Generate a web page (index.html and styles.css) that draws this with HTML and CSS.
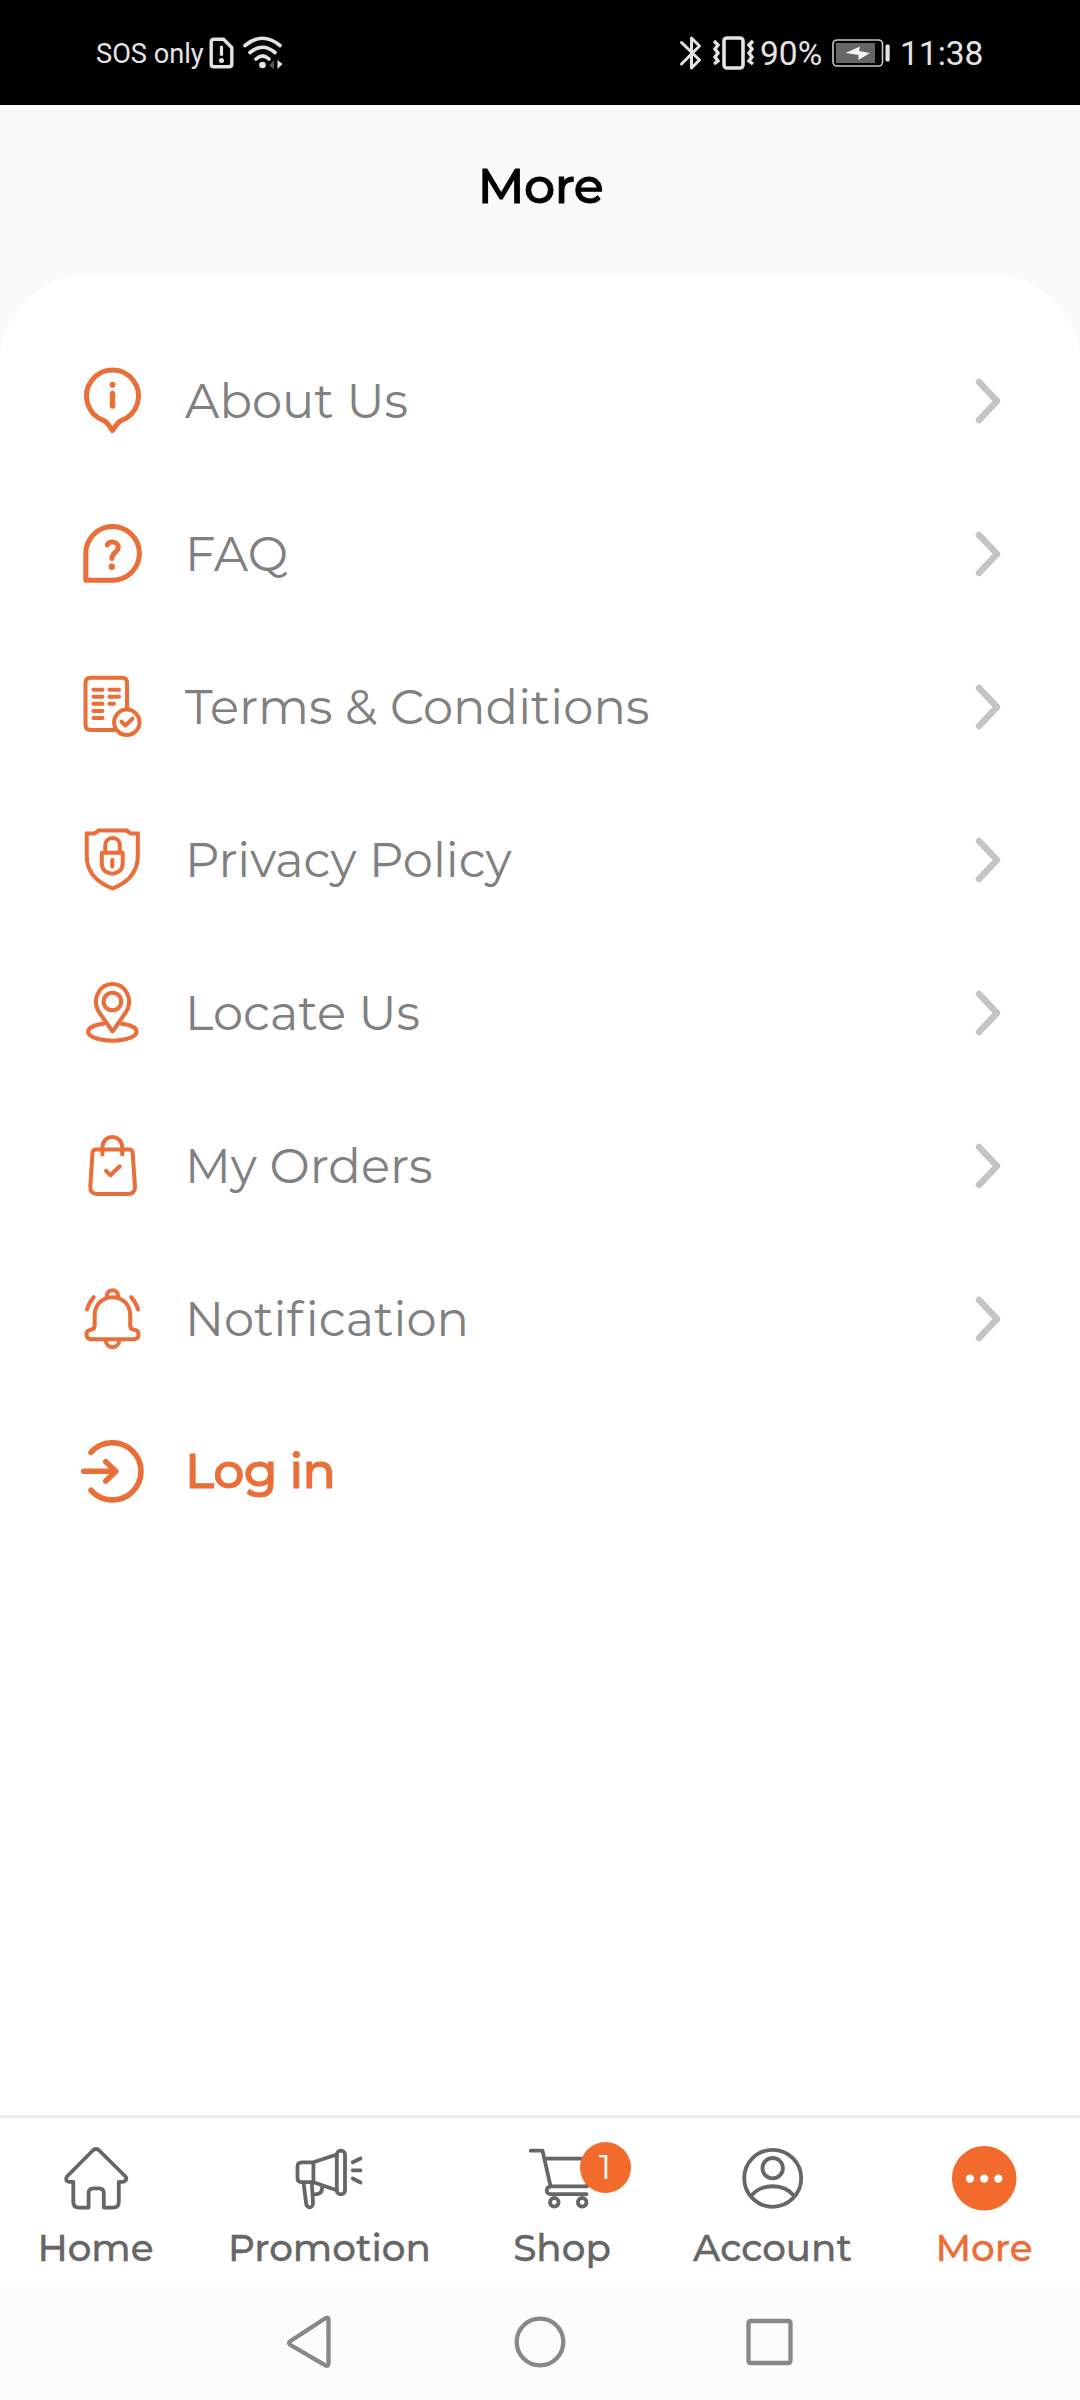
FILE: index.html
```html
<!DOCTYPE html>
<html lang="en">
<head>
<meta charset="utf-8">
<title>More</title>
<link rel="stylesheet" href="styles.css">
</head>
<body>
<div class="status">
  <span class="carrier">SOS only</span>
  <svg class="sim" width="26" height="34" viewBox="0 0 26 34"><path d="M5 3.2H14.5L22.8 11.500V28Q22.800 30.800 20 30.800H5Q2.200 30.800 2.200 28V6Q2.200 3.200 5 3.200Z" fill="none" stroke="#e4e4e4" stroke-width="3.400" stroke-linejoin="round"/><path d="M12.500 11V18.500" stroke="#e4e4e4" stroke-width="3.200" stroke-linecap="round"/><circle cx="12.500" cy="24.500" r="2.500" fill="#e4e4e4"/></svg>
  <svg class="wifi" width="42" height="34" viewBox="0 0 42 34"><g fill="none" stroke="#e4e4e4" stroke-width="3.600" stroke-linecap="round"><path d="M3 9.500Q20.500-5 38 9.500"/><path d="M8 16.500Q20.500 6 33 16.500"/><path d="M14 23Q20.500 17 27 23"/></g><circle cx="20.500" cy="29" r="3.300" fill="#e4e4e4"/><path d="M32 24V33L27 29.500Z" fill="#555"/><path d="M35.500 24L40.500 28L35.500 33Z" fill="#e4e4e4"/></svg>
  <span class="spacer"></span>
  <svg class="bt" width="24" height="36" viewBox="0 0 24 36"><path d="M2.500 7.500L20.500 25L12.500 33V3L20.500 11L2.500 29" fill="none" stroke="#e4e4e4" stroke-width="3" stroke-linejoin="round" stroke-linecap="round"/></svg>
  <svg class="vibrate" width="44" height="36" viewBox="0 0 44 36"><rect x="12" y="3" width="19" height="30" rx="3" fill="none" stroke="#e4e4e4" stroke-width="3.600"/><path d="M2 6L6 10L3 14L6 18L3 22L6 26L2 29M41 6L37 10L40 14L37 18L40 22L37 26L41 29" fill="none" stroke="#e4e4e4" stroke-width="3.400"/></svg>
  <span class="percent">90%</span>
  <svg class="battery" width="60" height="30" viewBox="0 0 60 30"><rect x="1" y="2" width="49.500" height="26" rx="4" fill="none" stroke="#c8c8c8" stroke-width="1.600"/><rect x="4" y="5" width="39" height="20" fill="#666"/><path d="M13.500 15L28 8.500L27 13L38 15L26.500 22L26.500 17Z" fill="#f4f4f4"/><rect x="53.500" y="6.500" width="4.200" height="17" rx="1.600" fill="#e4e4e4"/></svg>
  <span class="clock">11:38</span>
</div>
<header class="header"><h1 class="title">More</h1></header>
<main class="panel">
  <a class="row">
    <svg class="icon" viewBox="0 0 72 73" stroke-width="5"><path d="M45.500 56.400A26 26 0 1 0 27.500 56.400C31.500 58 32.500 61 36.500 66.500C40.500 61 41.500 58 45.500 56.400Z"/><circle class="solid" cx="36.500" cy="20.700" r="3"/><path d="M36.500 29.500V42" stroke-width="5.400"/></svg>
    <span class="label">About Us</span><svg class="chevron" viewBox="0 0 26 46"><path d="M4 4L22 23L4 42"/></svg>
  </a>
  <a class="row">
    <svg class="icon" viewBox="0 0 72 73" stroke-width="5"><path d="M9.800 63.200V36.400A26.800 26.800 0 1 1 36.800 63.200Z"/><path d="M31.300 28C32 23.500 42.500 24 42.300 30.500C42.200 35 35.800 35.500 35.800 41.500"/><circle class="solid" cx="35.800" cy="49.700" r="3.200"/></svg>
    <span class="label">FAQ</span><svg class="chevron" viewBox="0 0 26 46"><path d="M4 4L22 23L4 42"/></svg>
  </a>
  <a class="row">
    <svg class="icon" viewBox="0 0 72 73" stroke-width="4"><path d="M51 37V13Q51 7.800 46 7.800H14.500Q9.500 7.800 9.500 13V55Q9.500 60 14.500 60H38"/><circle cx="50.800" cy="52.300" r="12.700"/><path d="M17.400 19.700H26.500M33.500 19.700H43M17.400 26.700H26.500M33.500 26.700H43M17.400 33.700H26.500M33.500 33.700H38M17.400 41H26.500M17.400 48H26.500M45.500 51.700L49.400 55.500L56.500 48.700"/></svg>
    <span class="label terms">Terms &amp; Conditions</span><svg class="chevron" viewBox="0 0 26 46"><path d="M4 4L22 23L4 42"/></svg>
  </a>
  <a class="row">
    <svg class="icon" viewBox="0 0 72 73" stroke-width="4"><path class="miter" d="M10.700 10.500H18.500L22.500 7.600H51L54.500 10.500H61.800V33C61.800 49 53 59 36.500 65.500C20 59 10.700 49 10.700 33Z"/><path d="M25.800 29.800H46.700V40.500C46.700 54 25.800 54 25.800 40.500ZM29.300 29.500V22.500C29.300 12.500 43.800 12.500 43.800 22.500V29.500M36.300 36.800V43.500"/></svg>
    <span class="label">Privacy Policy</span><svg class="chevron" viewBox="0 0 26 46"><path d="M4 4L22 23L4 42"/></svg>
  </a>
  <a class="row">
    <svg class="icon" viewBox="0 0 72 73" stroke-width="4"><path d="M36.500 55.500L23.300 36.500C15 23.500 23.500 8 36.500 8C49.500 8 58 23.500 49.700 36.500Z"/><circle cx="36.400" cy="25.500" r="8.800"/><path d="M27.500 47.800C8 50 7.500 60 24 63.300C31 65 42 65 49 63.300C65 60 65 50 45.500 47.800"/></svg>
    <span class="label">Locate Us</span><svg class="chevron" viewBox="0 0 26 46"><path d="M4 4L22 23L4 42"/></svg>
  </a>
  <a class="row">
    <svg class="icon" viewBox="0 0 72 73" stroke-width="4"><path d="M20 20.500H53Q56.300 20.500 56.600 23.500L59 57.500Q59 65 51.500 65H21.500Q14 65 14.300 57.500L16.500 23.500Q17 20.500 20 20.500Z"/><path d="M26.400 25.500V18C27 4.500 45.500 4.500 46.200 18V25.500M30 41.900L34.300 46.200L43.700 37.300"/></svg>
    <span class="label">My Orders</span><svg class="chevron" viewBox="0 0 26 46"><path d="M4 4L22 23L4 42"/></svg>
  </a>
  <a class="row">
    <svg class="icon" viewBox="0 0 72 73" stroke-width="4"><path d="M15 57.200C9 56.500 9 48.500 15 47.800C17.500 47.500 18.700 46 18.700 43V33.500C18.700 9 54.200 9 54.200 33.500V43C54.200 46 55.500 47.500 58 47.800C64 48.500 64 56.500 58 57.200ZM30.800 14.500C31 6 42 6 42.200 14.500M29.500 58.500C31 67.500 42 67.500 43.500 58.500M17.800 15.200Q13 20.500 11 27.500M55.200 15.200Q60 20.500 62 27.500"/></svg>
    <span class="label">Noti<span class="loose">f</span>ication</span><svg class="chevron" viewBox="0 0 26 46"><path d="M4 4L22 23L4 42"/></svg>
  </a>
  <a class="row">
    <svg class="icon" viewBox="0 0 72 73" stroke-width="5.600"><path d="M15 17.300A28.600 28.600 0 1 1 15 55.300M7.800 36.300H39M29.800 26.800L39.800 36.300L29.800 46"/></svg>
    <span class="label login">Log in</span>
  </a>
</main>
<nav class="tabs">
  <a class="tab">
    <svg class="glyph" viewBox="0 0 80 80"><path d="M36.800 12.500Q40 9.500 43.200 12.500L69.500 38.500C71.500 41 69.500 43.800 66.500 43.800H62.800V64Q62.800 69.600 57 69.600H47.800V55Q47.800 50.300 43 50.300H37.500Q32.600 50.300 32.600 55V69.600H23Q17.300 69.600 17.300 64V43.800H13.500C10.500 43.800 9 41 11 38.500Z"/></svg>
    <span class="name">Home</span>
  </a>
  <a class="tab">
    <svg class="glyph" viewBox="0 0 80 80"><path d="M23.400 24.300H12Q7.500 24.300 7.500 28.500V40Q7.500 44.200 12 44.200H23.400ZM23.400 24.300L46.800 16.500M23.400 44.200L46.800 52.300M62.800 24.300L70.500 20.500M62.800 32.300H70.500M62.800 40.500L70.500 44.500M13.600 45L16 64.500C16.500 71.500 23.500 70.500 23 64.500L21.800 45M32 47.500V51Q32 56.300 24.500 56.300"/><rect x="46.800" y="12.600" width="8.200" height="43.800" rx="4.100"/></svg>
    <span class="name">Promotion</span>
  </a>
  <a class="tab">
    <span class="cart"><svg class="glyph" viewBox="0 0 80 80"><path d="M7.800 12.700H19.500L27.600 48.300H64M21.500 20.700H70L64 48.300M27.600 48.300C22.500 49 22.500 56.200 27.500 56.200H63.500"/><circle cx="31.300" cy="64.300" r="4.300"/><circle cx="59.200" cy="64.300" r="4.300"/></svg><span class="badge">1</span></span>
    <span class="name">Shop</span>
  </a>
  <a class="tab">
    <svg class="glyph" viewBox="0 0 80 80"><circle cx="39.700" cy="40.300" r="28.500"/><circle cx="39.700" cy="30.200" r="10.200"/><path d="M18.100 58C28.600 45 50.600 45 61.300 58"/></svg>
    <span class="name">Account</span>
  </a>
  <a class="tab active">
    <svg class="glyph" viewBox="0 0 80 80"><circle class="disc" cx="39.200" cy="40.300" r="32.300"/><g class="dots"><circle cx="25" cy="40.600" r="4.200"/><circle cx="39.200" cy="40.600" r="4.200"/><circle cx="53.300" cy="40.600" r="4.200"/></g></svg>
    <span class="name">More</span>
  </a>
</nav>
<div class="system">
  <svg class="key" viewBox="0 0 60 60"><path d="M48.500 9.500V53.500Q48.500 57 45 55.200L10.500 35Q7.500 33 10.500 31L45 8.500Q48.500 6.500 48.500 9.500Z"/></svg>
  <svg class="key" viewBox="0 0 60 60"><circle cx="30" cy="32" r="23.300"/></svg>
  <svg class="key" viewBox="0 0 60 60"><rect x="8.500" y="11" width="42" height="42" rx="2"/></svg>
</div>
</body>
</html>
```
FILE: styles.css
```css
* { box-sizing: border-box; }
body { margin: 0; width: 1080px; height: 2400px; display: flex; flex-direction: column; background: #fafafa; font-family: Montserrat, Inter, sans-serif; overflow: hidden; }
svg { display: block; flex: none; }

.status { height: 105px; padding: 1px 94px 0 96px; display: flex; align-items: center; background: #000; color: #e4e4e4; font-family: Roboto, sans-serif; font-size: 33.5px; white-space: nowrap; }
.carrier { width: 113px; font-size: 27.2px; padding-top: 1px; }
.wifi { margin-left: 7px; }
.spacer { flex: 1; }
.vibrate { margin-left: 9px; }
.percent { width: 70px; margin-left: 4px; }
.battery { margin-left: 2px; }
.clock { width: 86px; margin-left: 8px; }

.header { height: 169px; display: flex; justify-content: center; padding: 51px 0 0 1px; }
.title { margin: 0; font-size: 49px; line-height: 60px; font-weight: 500; color: #000; letter-spacing: -0.5px; -webkit-text-stroke: 1px #000; }

.panel { flex: 1; padding: 50px 79px 0 76px; background: #fff; border-radius: 90px 90px 0 0; }
.row { height: 153px; display: flex; align-items: center; }
.icon { width: 72px; height: 73px; fill: none; stroke: #e96e38; stroke-linecap: round; stroke-linejoin: round; }
.icon .solid { fill: #e96e38; stroke: none; }
.icon .miter { stroke-linejoin: miter; }
.label { flex: 1; margin-left: 37px; font-size: 48px; font-weight: 400; font-variant-ligatures: none; color: #808080; white-space: nowrap; }
.terms { letter-spacing: 0.06px; }
.loose { letter-spacing: 3px; }
.login { font-weight: 500; font-size: 49px; color: #e96e38; letter-spacing: -0.6px; padding-bottom: 2px; -webkit-text-stroke: 1px #e96e38; }
.chevron { width: 26px; height: 46px; fill: none; stroke: #c4c4c4; stroke-width: 6.500px; stroke-linecap: round; stroke-linejoin: round; }

.tabs { height: 169px; display: grid; grid-template-columns: 192px 276px 189px 232px 191px; border-top: 3px solid #ececec; background: #fff; color: #666; }
.tab { display: flex; flex-direction: column; align-items: center; padding-top: 20px; }
.glyph { width: 80px; height: 80px; fill: none; stroke: #666; stroke-width: 3.800px; stroke-linecap: round; stroke-linejoin: round; }
.name { margin: 7px 1px 0 0; font-size: 37.3px; line-height: 46px; font-weight: 500; white-space: nowrap; -webkit-text-stroke: 0.3px currentColor; }
.active { color: #ec6c33; }
.glyph .disc { fill: #f26a2c; stroke: none; }
.dots { fill: #fff; stroke: none; }
.cart { position: relative; }
.badge { position: absolute; left: 57px; top: 4px; width: 51px; height: 51px; border-radius: 50%; background: #f26a2c; color: #fff; font-size: 34px; line-height: 50px; font-weight: 400; text-align: center; }

.system { height: 116px; display: flex; gap: 170px; padding: 26px 0 0 280px; background: #fcfcfc; }
.key { width: 60px; height: 60px; fill: none; stroke: #888; stroke-width: 4.300px; stroke-linejoin: round; }
```
